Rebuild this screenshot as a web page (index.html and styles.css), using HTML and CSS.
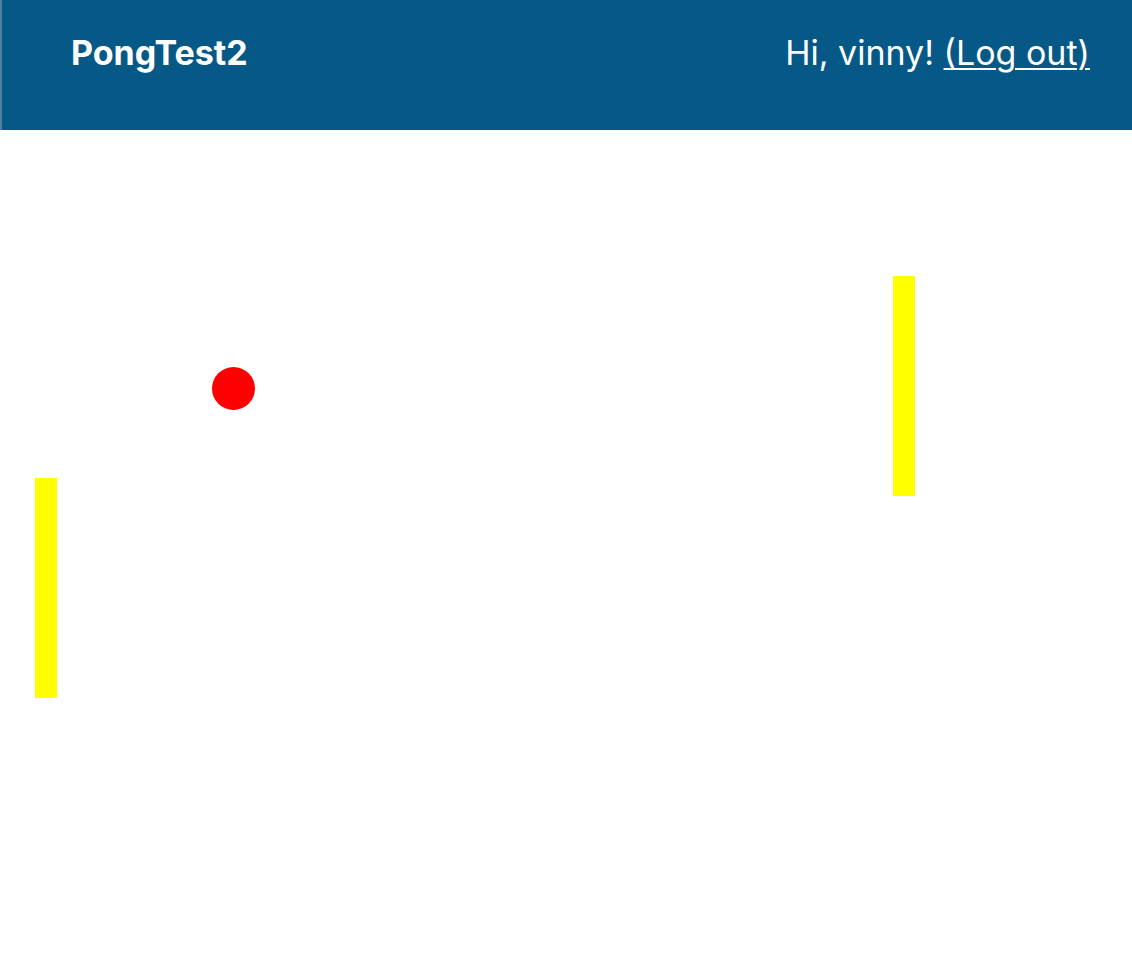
FILE: index.html
```html
<!DOCTYPE html>
<html>
<head>
<meta charset="utf-8">
<link rel="stylesheet" href="styles.css">
</head>
<body>
<header class="topbar">
  <div class="brand">PongTest2</div>
  <div class="user">Hi, vinny! <a href="#" class="logout">(Log out)</a></div>
</header>
<main class="court">
  <div class="paddle paddle-left"></div>
  <div class="paddle paddle-right"></div>
  <div class="ball"></div>
</main>
</body>
</html>
```

FILE: styles.css
```css
html, body {
  margin: 0;
  padding: 0;
  background: #ffffff;
}
body {
  font-family: Inter, "Noto Sans", sans-serif;
  width: 1132px;
  height: 958px;
  overflow: hidden;
}
.topbar {
  box-sizing: border-box;
  height: 130px;
  background: #065986;
  border-left: 2px solid #4f80a2;
  display: flex;
  justify-content: space-between;
  align-items: flex-start;
  padding: 30px 42px 0 69px;
  color: #ffffff;
  font-size: 34px;
  line-height: 46px;
}
.brand {
  font-weight: 700;
}
.user {
  font-weight: 400;
}
.logout {
  color: #ffffff;
  text-decoration: underline;
  text-underline-offset: 3px;
  text-decoration-thickness: 2px;
}
.court {
  position: relative;
  height: 828px;
}
.paddle {
  position: absolute;
  width: 22px;
  height: 220px;
  background: #ffff00;
}
.paddle-left {
  left: 35px;
  top: 348px;
}
.paddle-right {
  left: 893px;
  top: 146px;
}
.ball {
  position: absolute;
  left: 212px;
  top: 237px;
  width: 43px;
  height: 43px;
  border-radius: 50%;
  background: #ff0000;
}
```
